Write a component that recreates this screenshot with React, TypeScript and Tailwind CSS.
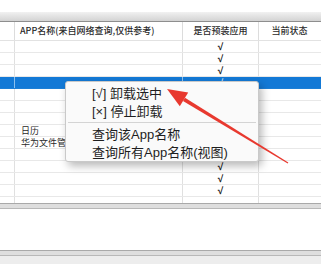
import type { ReactNode } from 'react'

type Row = { label?: string; checked: boolean; selected?: boolean }

// rows 5-9 sit under the context menu, so their ticks are never visible
const ROWS: Row[] = [
  { checked: true },
  { checked: true },
  { checked: true },
  { checked: true, selected: true },
  { checked: false },
  { checked: false },
  { checked: false },
  { label: '日历', checked: false },
  { label: '华为文件管理', checked: false },
  { checked: true },
  { checked: true },
  { checked: true },
  { checked: true },
  { checked: false },
]

const MENU: Array<{ label: string; sep?: boolean }> = [
  { label: '[√] 卸载选中' },
  { label: '[×] 停止卸载', sep: true },
  { label: '查询该App名称' },
  { label: '查询所有App名称(视图)' },
]

const COLS = 'grid grid-cols-[15px_168px_76px_62px]'

function Cell({ children, className = '' }: { children?: ReactNode; className?: string }) {
  return <div className={`flex items-center overflow-hidden whitespace-nowrap border-r ${className}`}>{children}</div>
}

function DoubleRule() {
  return (
    <div className="flex flex-col">
      <div className="h-px bg-[#a9a9a9]" />
      <div className="h-[4px] bg-[#dedede]" />
      <div className="h-px bg-[#b8b8b8]" />
    </div>
  )
}

function ContextMenu() {
  return (
    <div
      className="absolute left-[65px] top-[81px] w-[194px] rounded-[3px] border border-[#c9c9c9] bg-[#fafafa] pt-[2px] shadow-[3px_4px_8px_rgba(0,0,0,0.28)]"
      style={{ fontFamily: '"Liberation Sans", "Noto Sans CJK SC", sans-serif' }}
    >
      {MENU.map((item) => (
        <div key={item.label}>
          <div className="flex h-[18px] items-center pl-[26px] text-[13px] leading-none text-[#1e1e1e]">{item.label}</div>
          {item.sep && <div className="mx-[2px] my-[2px] h-px bg-[#d4d4d4]" />}
        </div>
      ))}
    </div>
  )
}

function Arrow() {
  return (
    <svg className="pointer-events-none absolute left-0 top-0" width="321" height="264" viewBox="0 0 321 264">
      <polygon points="185,97.7 183,101.1 287.7,163.4 288.3,162.6" fill="#e8392f" />
      <polygon points="167,89 188.2,92.6 179.8,106.2" fill="#e8392f" />
    </svg>
  )
}

export default function App() {
  return (
    <div
      className="relative h-[264px] w-[321px] overflow-hidden bg-white"
      style={{ fontFamily: '"Noto Sans CJK SC", "Noto Sans", sans-serif' }}
    >
      <div className="h-[12px] bg-white" />
      <div className="h-[9px] bg-gradient-to-b from-[#f1f1f1] to-[#d3d3d3]" />
      <div className="h-px bg-[#8e8e8e]" />

      {/* header */}
      <div className={`${COLS} h-[19px] border-b border-[#e2e2e2] text-[9px] font-medium text-[#2a2a2a]`}>
        <Cell className="border-[#dcdcdc]" />
        <Cell className="border-[#dcdcdc] pl-[5px]">APP名称(来自网络查询,仅供参考)</Cell>
        <Cell className="justify-center border-[#dcdcdc]">是否预装应用</Cell>
        <Cell className="justify-center border-transparent">当前状态</Cell>
      </div>

      {/* body */}
      <div className="h-[162px] overflow-hidden">
        {ROWS.map((row, i) => (
          <div
            key={i}
            className={`${COLS} h-[12px] border-b text-[9px] ${
              row.selected ? 'border-[#1d7fd6] bg-[#1379d6] text-white' : 'border-[#e8e8e8] text-[#2a2a2a]'
            }`}
          >
            <Cell className={row.selected ? 'border-[#8cc0ee]' : 'border-[#e0e0e0]'} />
            <Cell className={`pl-[6px] ${row.selected ? 'border-[#8cc0ee]' : 'border-[#e0e0e0]'}`}>{row.label}</Cell>
            <Cell
              className={`justify-center font-bold ${
                row.selected ? 'border-[#1379d6] text-[#cfe4f7]' : 'border-[#e0e0e0] text-[#141414]'
              }`}
            >
              {row.checked && (
                <span className="text-[10px] leading-none" style={{ fontFamily: '"Liberation Sans", sans-serif' }}>
                  √
                </span>
              )}
            </Cell>
            <Cell className="border-transparent" />
          </div>
        ))}
      </div>

      <DoubleRule />
      <div className="h-[41px] bg-white" />
      <DoubleRule />
      <div className="h-[8px] bg-[#ededed]" />

      <ContextMenu />
      <Arrow />
    </div>
  )
}
